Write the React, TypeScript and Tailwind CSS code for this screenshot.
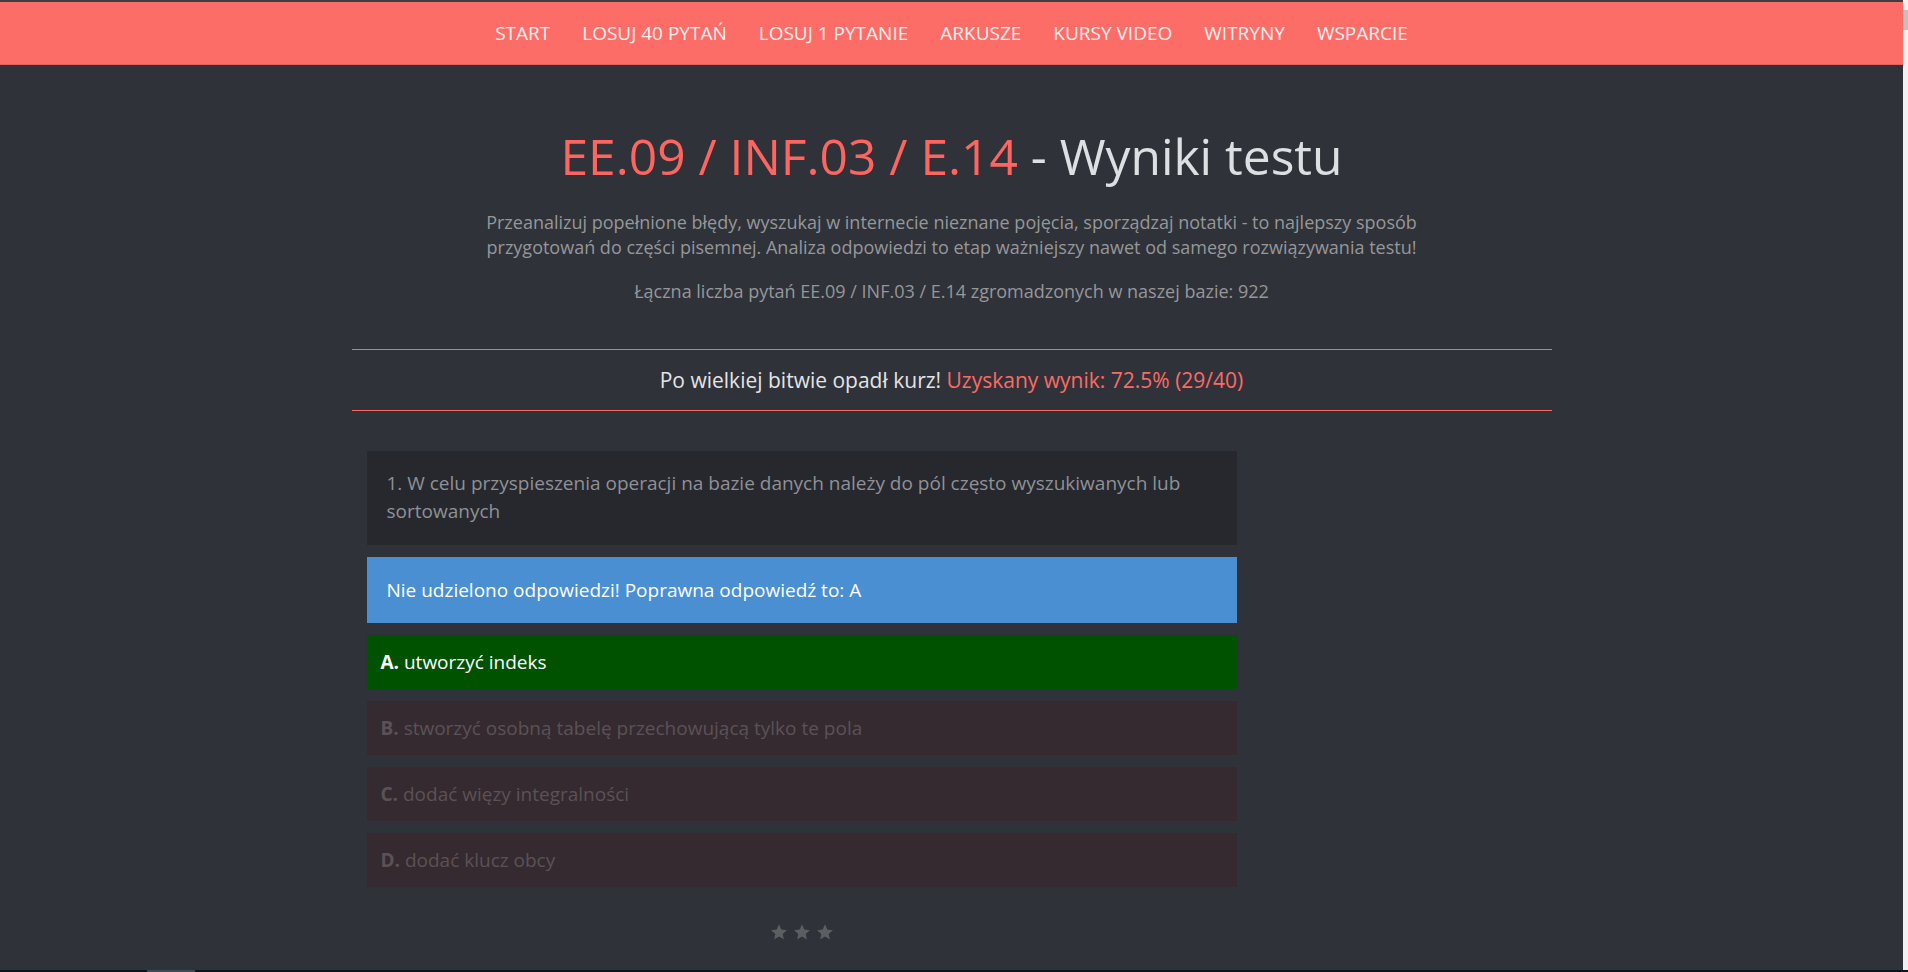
import { ReactNode } from "react";

const navItems = [
  "START",
  "LOSUJ 40 PYTAŃ",
  "LOSUJ 1 PYTANIE",
  "ARKUSZE",
  "KURSY VIDEO",
  "WITRYNY",
  "WSPARCIE",
];

const answers = [
  { letter: "B.", text: "stworzyć osobną tabelę przechowującą tylko te pola" },
  { letter: "C.", text: "dodać więzy integralności" },
  { letter: "D.", text: "dodać klucz obcy" },
];

function Star() {
  return (
    <svg viewBox="0 0 24 24" className="w-[18px] h-[18px]" fill="#5c5e62">
      <path d="M12 1.8l3.1 6.9 7.4.8-5.6 5 1.6 7.4L12 18.1l-6.5 3.8 1.6-7.4-5.6-5 7.4-.8z" />
    </svg>
  );
}

function AnswerBox({ children, className }: { children: ReactNode; className: string }) {
  return (
    <div className={`px-[14px] py-[13px] text-[19px] leading-[28px] ${className}`}>{children}</div>
  );
}

export default function App() {
  return (
    <div className="h-screen flex flex-col overflow-hidden bg-[#2f3238] font-['Open_Sans',_'Noto_Sans',sans-serif]">
      <div className="flex flex-1 min-h-0">
        <div className="flex-1 flex flex-col">
          <div className="h-[2px] bg-[#3e3f42]" />
          {/* Top navigation */}
          <nav className="h-[63px] bg-[#fd6d68] border-b border-[#e8605b] flex items-center justify-center">
            <ul className="flex">
              {navItems.map((item) => (
                <li key={item} className="px-4 text-[19px] text-[#fcefee] leading-none">
                  {item}
                </li>
              ))}
            </ul>
          </nav>

          <main className="w-[1200px] mx-auto pt-[64px]">
            <h1 className="text-center text-[49.7px] leading-[55px] text-[#dde0e3]">
              <span className="text-[#fd6560]">EE.09 / INF.03 / E.14</span> - Wyniki testu
            </h1>
            <p className="mt-[26px] text-center text-[18px] leading-[25px] text-[#96979a]">
              Przeanalizuj popełnione błędy, wyszukaj w internecie nieznane pojęcia, sporządzaj notatki - to najlepszy sposób
              <br />
              przygotowań do części pisemnej. Analiza odpowiedzi to etap ważniejszy nawet od samego rozwiązywania testu!
            </p>
            <p className="mt-[19px] text-center text-[18px] leading-[25px] text-[#96979a]">
              Łączna liczba pytań EE.09 / INF.03 / E.14 zgromadzonych w naszej bazie: 922
            </p>

            <div className="mt-[45px] border-y border-[#fd6a66] py-4 text-center text-[21px] leading-[28px] text-[#e3e4e6]">
              Po wielkiej bitwie opadł kurz! <span className="text-[#fd6a66]">Uzyskany wynik: 72.5% (29/40)</span>
            </div>

            <div className="px-[15px] pt-[40px]">
              <div className="w-[870px] flex flex-col gap-3">
                <div className="bg-[#26282d] px-5 pt-[18px] pb-[20px] text-[19px] leading-[28px] text-[#8f9196]">
                  1. W celu przyspieszenia operacji na bazie danych należy do pól często wyszukiwanych lub sortowanych
                </div>
                <div className="bg-[#4a8fd1] px-5 py-[19px] text-[19px] leading-[28px] text-white">
                  Nie udzielono odpowiedzi! Poprawna odpowiedź to: A
                </div>
                <AnswerBox className="bg-[#005100] text-white">
                  <b className="font-bold">A.</b> utworzyć indeks
                </AnswerBox>
                {answers.map((a) => (
                  <AnswerBox key={a.letter} className="bg-[#352a30] text-[#5b5256]">
                    <b className="font-bold">{a.letter}</b> {a.text}
                  </AnswerBox>
                ))}
                <div className="flex justify-center gap-[5px] pt-[24px]">
                  <Star />
                  <Star />
                  <Star />
                </div>
              </div>
            </div>
          </main>
        </div>
        {/* browser scrollbar strip */}
        <div className="w-[5px] bg-[#f0f0f0] pt-[10px]">
          <div className="h-[20px] bg-[#c1c1c1]" />
        </div>
      </div>
      <div className="h-[2px] bg-[#0c171d] flex">
        <div className="ml-[147px] w-[48px] bg-[#3c4a54]" />
      </div>
    </div>
  );
}
